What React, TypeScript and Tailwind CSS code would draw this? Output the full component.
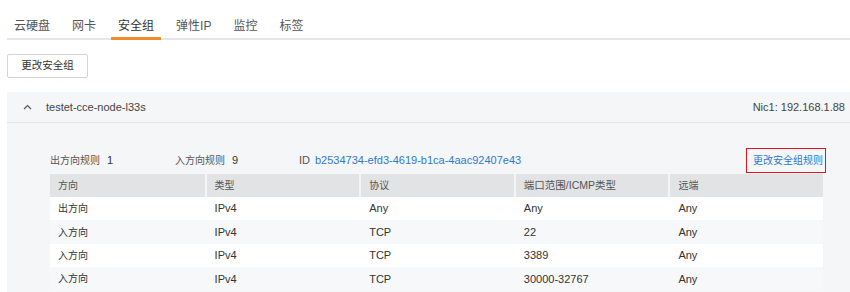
import React from "react";

const FONT = {
  fontFamily: '"Liberation Sans", "Noto Sans CJK SC", sans-serif',
};

const tabs = ["云硬盘", "网卡", "安全组", "弹性IP", "监控", "标签"];
const rows = [
  ["出方向", "IPv4", "Any", "Any", "Any"],
  ["入方向", "IPv4", "TCP", "22", "Any"],
  ["入方向", "IPv4", "TCP", "3389", "Any"],
  ["入方向", "IPv4", "TCP", "30000-32767", "Any"],
];
const heads = ["方向", "类型", "协议", "端口范围/ICMP类型", "远端"];

function isCJK(s: string) {
  return /[\u4e00-\u9fff]/.test(s) && !/[A-Za-z0-9]/.test(s);
}

export default function App() {
  return (
    <div className="w-[850px] h-[292px] overflow-hidden bg-white text-[#333]" style={FONT}>
      <div className="pl-[7px]">
        <div className="flex gap-[8px] border-b-2 border-[#e6e6e6] h-[40px]">
          {tabs.map((t, i) => (
            <div
              key={t}
              className={
                "px-[7px] pt-[18px] text-[12px] leading-[16px] -mb-[2px] " +
                (i === 2
                  ? "border-b-[3px] border-[#f08c2b] text-[#333]"
                  : "text-[#555]")
              }
            >
              {t}
            </div>
          ))}
        </div>
        <div className="pt-[14px]">
          <button className="w-[81px] h-[24px] border border-[#d4d4d4] rounded-[2px] text-[10.5px] text-[#333] bg-white flex items-center justify-center">
            更改安全组
          </button>
        </div>
        <div className="mt-[14px] bg-[#f5f6f7] h-[200px]">
          <div className="h-[31px] border-b border-[#e3e4e6] flex items-center text-[11px] pr-[5px]">
            <div className="w-[39px] flex justify-center pl-[1px]">
              <svg width="9" height="6" viewBox="0 0 9 6">
                <polyline points="1,5 4.5,1.5 8,5" fill="none" stroke="#555" strokeWidth="1.2" />
              </svg>
            </div>
            <div className="text-[#444]">testet-cce-node-l33s</div>
            <div className="ml-auto text-[#444]">Nic1: 192.168.1.88</div>
          </div>
          <div className="pl-[43px] pr-[27px] pt-[25px]">
            <div className="flex items-center h-[25px] text-[11px]">
              <div className="w-[125px]">
                <span className="text-[#555] text-[10px]">出方向规则</span>
                <span className="ml-[7px] text-[#333]">1</span>
              </div>
              <div className="w-[124px]">
                <span className="text-[#555] text-[10px]">入方向规则</span>
                <span className="ml-[7px] text-[#333]">9</span>
              </div>
              <div>
                <span className="text-[#555]">ID</span>
                <span className="ml-[5px] text-[#2f78d0]">b2534734-efd3-4619-b1ca-4aac92407e43</span>
              </div>
              <div className="ml-auto -mr-[3px] h-[25px] pl-[6px] pr-[2px] border-[1.5px] border-[#e0141e] flex items-center text-[10px] text-[#2f78d0]">
                更改安全组规则
              </div>
            </div>
            <div className="mt-[1px] text-[11px]">
              <div className="grid grid-cols-5 h-[23px] bg-[#e1e3e5] text-[#555]">
                {heads.map((h, i) => (
                  <div
                    key={h}
                    className={
                      "flex items-center pl-[8px] " +
                      (isCJK(h) ? "text-[10px] " : "text-[10.5px] ") +
                      (i > 0 ? "border-l-2 border-[#f3f4f5]" : "")
                    }
                  >
                    {h}
                  </div>
                ))}
              </div>
              {rows.map((r, ri) => (
                <div
                  key={ri}
                  className={
                    "grid grid-cols-5 h-[23.4px] " + (ri % 2 === 0 ? "bg-white" : "bg-[#f7f8f9]")
                  }
                >
                  {r.map((c, ci) => (
                    <div
                      key={ci}
                      className={
                        "flex items-center " +
                        (isCJK(c) ? "text-[10px] " : "") +
                        (ci > 0 ? "pl-[10px]" : "pl-[8px]")
                      }
                    >
                      {c}
                    </div>
                  ))}
                </div>
              ))}
            </div>
          </div>
        </div>
      </div>
    </div>
  );
}
